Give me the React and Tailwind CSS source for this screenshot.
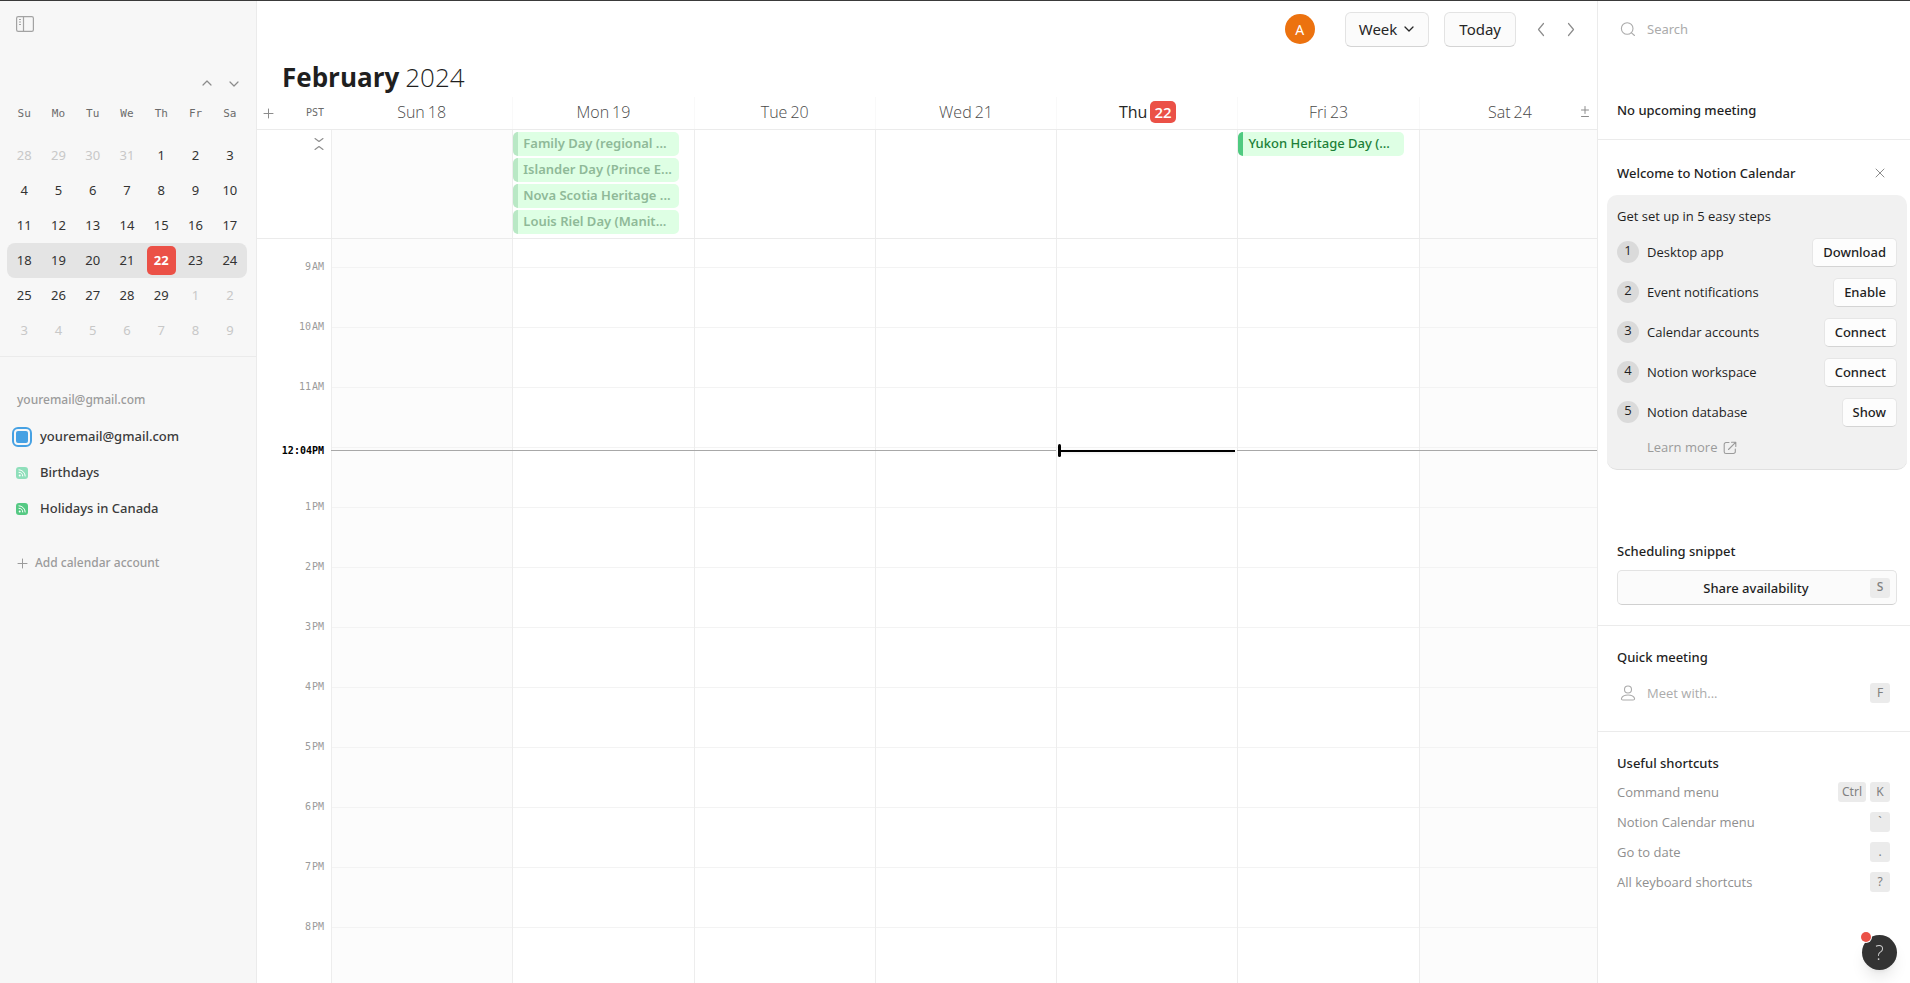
import React from "react";

const WEEKDAYS = ["Su", "Mo", "Tu", "We", "Th", "Fr", "Sa"];
const WEEKS = [
  [28, 29, 30, 31, 1, 2, 3],
  [4, 5, 6, 7, 8, 9, 10],
  [11, 12, 13, 14, 15, 16, 17],
  [18, 19, 20, 21, 22, 23, 24],
  [25, 26, 27, 28, 29, 1, 2],
  [3, 4, 5, 6, 7, 8, 9],
];
const DAYS = [
  { name: "Sun", date: 18, weekend: true, events: [] },
  {
    name: "Mon",
    date: 19,
    past: true,
    events: [
      "Family Day (regional ...",
      "Islander Day (Prince E...",
      "Nova Scotia Heritage ...",
      "Louis Riel Day (Manit...",
    ],
  },
  { name: "Tue", date: 20, events: [] },
  { name: "Wed", date: 21, events: [] },
  { name: "Thu", date: 22, today: true, events: [] },
  { name: "Fri", date: 23, events: ["Yukon Heritage Day (..."] },
  { name: "Sat", date: 24, weekend: true, last: true, events: [] },
];
const HOURS = ["9 AM", "10 AM", "11 AM", "", "1 PM", "2 PM", "3 PM", "4 PM", "5 PM", "6 PM", "7 PM", "8 PM"];
const STEPS = [
  ["Desktop app", "Download"],
  ["Event notifications", "Enable"],
  ["Calendar accounts", "Connect"],
  ["Notion workspace", "Connect"],
  ["Notion database", "Show"],
];
const SHORTCUTS = [
  ["Command menu", ["Ctrl", "K"]],
  ["Notion Calendar menu", ["`"]],
  ["Go to date", ["."]],
  ["All keyboard shortcuts", ["?"]],
];

function Icon({ d, size = 16, className = "", sw = 1 }) {
  return (
    <svg
      width={size}
      height={size}
      viewBox={`0 0 ${size} ${size}`}
      fill="none"
      stroke="currentColor"
      strokeWidth={sw}
      strokeLinecap="round"
      strokeLinejoin="round"
      className={"shrink-0 " + className}
      aria-hidden="true"
    >
      <path d={d} />
    </svg>
  );
}

function Kbd({ children }) {
  return (
    <kbd className="flex h-5 min-w-5 items-center justify-center rounded-[3px] bg-[#ebebeb] px-1 pb-px font-['Noto_Sans',sans-serif] text-[12px] text-[#808080]">
      {children}
    </kbd>
  );
}

function Heading({ children, className = "" }) {
  return (
    <h2 className={"font-['Noto_Sans',sans-serif] text-[13px] leading-5 font-medium " + className}>{children}</h2>
  );
}

function MiniCalendar() {
  return (
    <div className="mr-[9px] ml-[7px]">
      <table className="w-full table-fixed border-separate border-spacing-0 text-center">
        <thead>
          <tr>
            {WEEKDAYS.map((d) => (
              <th
                key={d}
                className="h-[38px] p-0 pt-1 align-top font-['DejaVu_Sans_Mono',monospace] text-[11px] leading-5 font-normal text-[#6b6b6b]"
              >
                {d}
              </th>
            ))}
          </tr>
        </thead>
        <tbody>
          {WEEKS.map((week, w) => (
            <tr key={w}>
              {week.map((day, i) => {
                const outside = (w === 0 && day > 20) || (w > 3 && day < 20);
                const current = w === 3;
                return (
                  <td
                    key={i}
                    className={
                      "h-[35px] p-0 font-['Noto_Sans',sans-serif] text-[13px] " +
                      (outside ? "text-[#c8c8c8] " : "text-[#333333] ") +
                      (current ? "bg-[#e4e4e4] first:rounded-l-lg last:rounded-r-lg" : "")
                    }
                  >
                    {current && day === 22 ? (
                      <span className="mx-auto flex h-[29px] w-[29px] items-center justify-center rounded-[5px] bg-[#eb5147] font-bold text-white">
                        22
                      </span>
                    ) : (
                      day
                    )}
                  </td>
                );
              })}
            </tr>
          ))}
        </tbody>
      </table>
    </div>
  );
}

function FeedIcon({ className }) {
  return (
    <span className={"flex h-3 w-3 items-center justify-center rounded-[3px] text-white " + className}>
      <svg width="12" height="12" viewBox="0 0 12 12" fill="none" stroke="currentColor" strokeLinecap="round" aria-hidden="true">
        <path d="M3 2.8a6.2 6.2 0 0 1 6.2 6.2M3 5.3A3.7 3.7 0 0 1 6.7 9" />
        <circle cx="3.7" cy="8.4" r="1" fill="currentColor" stroke="none" />
      </svg>
    </span>
  );
}

function Sidebar() {
  return (
    <aside className="flex w-[257px] shrink-0 flex-col border-r border-[#ebebeb] bg-[#f7f7f7]">
      <div className="flex h-[46px] items-center pl-4">
        <button aria-label="Toggle sidebar" className="text-[#a3a3a3]">
          <svg width="18" height="16" viewBox="0 0 18 16" fill="none" stroke="currentColor" aria-hidden="true">
            <rect x="0.6" y="0.6" width="16.8" height="14.8" rx="1.6" strokeWidth="1.2" />
            <path d="M7.5 1v14" strokeWidth="1.2" />
            <path d="M3 3.5h2M3 6h2M3 8.5h2" />
          </svg>
        </button>
      </div>
      <div className="mt-[26px] flex h-[27px] items-start justify-end gap-[11px] pr-[14px] text-[#8c8c8c]">
        <button aria-label="Previous month" className="py-0.5">
          <Icon d="M4 10l4-4 4 4" sw={1.2} />
        </button>
        <button aria-label="Next month" className="py-0.5">
          <Icon d="M4 7l4 4 4-4" sw={1.2} />
        </button>
      </div>
      <MiniCalendar />
      <div className="mt-2 border-t border-[#ebebeb]" />
      <div className="flex flex-col pt-[33px] font-['Noto_Sans',sans-serif] text-[13px] font-medium text-[#3b3b3b]">
        <h2 className="mb-[9px] pl-[17px] text-[12px] leading-5 text-[#9b9b9b]">youremail@gmail.com</h2>
        <label className="flex h-9 items-center pl-3">
          <input
            type="checkbox"
            defaultChecked
            className="mr-2 h-5 w-5 appearance-none rounded-[6px] border-2 border-[#46a1e3] bg-[#46a1e3] bg-clip-content p-0.5 checked:bg-[#46a1e3]"
          />
          youremail@gmail.com
        </label>
        <div className="flex h-9 items-center gap-3 pl-4">
          <FeedIcon className="bg-[#8fdfbb]" />
          Birthdays
        </div>
        <div className="flex h-9 items-center gap-3 pl-4">
          <FeedIcon className="bg-[#55c983]" />
          Holidays in Canada
        </div>
        <button className="mt-[26px] flex h-5 items-center gap-[5px] self-start pl-[15px] text-[12px] text-[#9b9b9b]">
          <Icon d="M7.5 3v9M3 7.5h9" size={15} />
          Add calendar account
        </button>
      </div>
    </aside>
  );
}

function EventChip({ title, past }) {
  return (
    <button
      className={
        "mr-[15px] flex h-6 items-center overflow-hidden rounded-[5px] border-l-[5px] bg-[#deffe4] pl-[5px] font-['Noto_Sans',sans-serif] text-[13px] whitespace-nowrap " +
        (past ? "border-[#b9e8c5] font-semibold text-[#8fb998]" : "border-[#4fca80] font-medium text-[#1c7f38]")
      }
    >
      {title}
    </button>
  );
}

function WeekView() {
  return (
    <main className="flex min-w-0 flex-1 flex-col overflow-hidden">
      <div className="flex h-14 shrink-0 items-center justify-end pr-[17px] font-['Noto_Sans',sans-serif]">
        <button className="flex h-[30px] w-[30px] items-center justify-center rounded-full bg-[#ec720f] text-[14px] text-white">
          A
        </button>
        <button className="ml-[30px] flex h-[35px] items-center gap-1.5 rounded-md border border-[#e3e3e3] border-b-[#d4d4d4] bg-[#fbfbfb] px-[13px] text-[15px] text-[#262626]">
          Week
          <Icon d="M2 4l4 4 4-4" size={12} sw={1.3} />
        </button>
        <button className="ml-[15px] h-[35px] rounded-md border border-[#e3e3e3] border-b-[#d4d4d4] bg-[#fbfbfb] px-[14px] text-[15px] text-[#262626]">
          Today
        </button>
        <button aria-label="Previous week" className="ml-4 text-[#8c8c8c]">
          <Icon d="M11.5 3.500L6.500 9.500l5 6" size={18} sw={1.2} />
        </button>
        <button aria-label="Next week" className="ml-3 text-[#8c8c8c]">
          <Icon d="M6.500 3.500L11.500 9.500l-5 6" size={18} sw={1.2} />
        </button>
      </div>
      <h1 className="flex h-10 shrink-0 gap-1.5 pl-[25px] text-[26px] leading-10 text-[#1f1f1f]">
        <b className="font-bold">February</b>
        <span className="font-light">2024</span>
      </h1>
      <div className="flex h-[33px] shrink-0 border-b border-[#ebebeb]">
        <div className="flex w-[74px] shrink-0 items-center justify-between pr-[7px] pl-1">
          <button aria-label="Add time zone" className="text-[#8c8c8c]">
            <Icon d="M7.500 4v9M3 8.500h9" />
          </button>
          <span className="pb-0.5 font-['DejaVu_Sans_Mono',monospace] text-[10px] text-[#6b6b6b]">PST</span>
        </div>
        <div className="-mr-[3px] grid flex-1 grid-cols-7">
          {DAYS.map((d, i) => (
            <div
              key={d.name}
              className={
                "relative flex items-center justify-center gap-[3px] pb-0.5 text-[16px] " +
                (d.today ? "text-[#262626] " : "font-light text-[#4a4a4a] ") +
                (i > 0 ? "border-l border-[#f9f9f9]" : "")
              }
            >
              {d.name}
              {d.today ? (
                <span className="rounded-[5px] bg-[#eb5147] px-1 text-[15px] leading-[22px] font-semibold text-white">22</span>
              ) : (
                <span>{d.date}</span>
              )}
              {d.last && (
                <button aria-label="Adjust days" className="absolute right-[7px] text-[#8c8c8c]">
                  <Icon d="M8 2.500v7M4.500 6h7M4.500 12.500h7" />
                </button>
              )}
            </div>
          ))}
        </div>
      </div>
      <div className="flex h-[109px] shrink-0 border-b border-[#ebebeb]">
        <div className="flex w-[74px] shrink-0 justify-end pt-1.5 pr-1">
          <button aria-label="Collapse all-day events" className="h-4 text-[#8c8c8c]">
            <Icon d="M4 2.500l4 3 4-3M4 13.500l4-3 4 3" sw={1.1} />
          </button>
        </div>
        <div className="-mr-[3px] grid flex-1 grid-cols-7">
          {DAYS.map((d, i) => (
            <div
              key={d.name}
              className={
                "flex flex-col gap-0.5 border-l border-[#ededed] pt-0.5 " + (d.weekend ? "bg-[#fcfcfc]" : "")
              }
            >
              {d.events.map((e) => (
                <EventChip key={e} title={e} past={d.past} />
              ))}
            </div>
          ))}
        </div>
      </div>
      <div className="relative flex min-h-0 flex-1 overflow-hidden">
        <div className="flex w-[74px] shrink-0 flex-col gap-10 pt-[17px] pr-[7px] font-['DejaVu_Sans_Mono',monospace] text-[10px] text-[#9b9b9b]">
          {HOURS.map((h, i) => (
            <div key={i} className="flex h-5 shrink-0 items-center justify-end gap-px">
              {h.split(" ").map((part) => (
                <span key={part}>{part}</span>
              ))}
            </div>
          ))}
        </div>
        <div className="-mr-[3px] grid flex-1 grid-cols-7">
          {DAYS.map((d) => (
            <div
              key={d.name}
              className={"flex flex-col border-l border-[#ededed] " + (d.weekend ? "bg-[#fcfcfc]" : "")}
            >
              <div className="h-[29px] shrink-0 border-b border-[#f3f3f3]" />
              {HOURS.map((h, j) => (
                <div key={j} className="h-[60px] shrink-0 border-b border-[#f3f3f3]" />
              ))}
            </div>
          ))}
        </div>
        <div className="absolute inset-x-0 top-[202px] flex h-[19px] items-center">
          <time className="w-[74px] pr-[7px] text-right font-['DejaVu_Sans_Mono',monospace] text-[10px] font-bold text-black">
            12:04PM
          </time>
          <div className="-mr-[3px] grid flex-1 grid-cols-7 items-center">
            <div className="col-span-4 h-px bg-[#a8a8a8]" />
            <div className="flex items-center px-0.5">
              <span className="h-[13px] w-[3px] rounded-sm bg-black" />
              <span className="h-0.5 flex-1 bg-black shadow" />
            </div>
            <div className="col-span-2 h-px bg-[#a8a8a8]" />
          </div>
        </div>
      </div>
    </main>
  );
}

function ContextPanel() {
  return (
    <aside className="flex w-[313px] shrink-0 flex-col border-l border-[#ebebeb] text-[13px] text-[#1f1f1f]">
      <label className="flex h-14 shrink-0 items-center pr-3 pl-[22px] text-[#ababab]">
        <Icon d="M13 7.500a5.800 5.800 0 1 1-11.600 0a5.800 5.800 0 1 1 11.600 0M11.500 11.800L14.500 14.500" sw={1.1} />
        <input
          type="search"
          aria-label="Search"
          placeholder="Search"
          className="ml-[11px] min-w-0 flex-1 pt-0.5 font-['Noto_Sans',sans-serif] outline-none placeholder:text-[#ababab]"
        />
      </label>
      <section className="border-b border-[#ebebeb] pt-[43px] pb-[19px] pl-[19px]">
        <Heading>No upcoming meeting</Heading>
      </section>
      <section className="border-b border-[#ebebeb] pt-[23px] pb-5">
        <div className="mb-3 flex h-5 items-center justify-between pr-[22px] pl-[19px]">
          <Heading>Welcome to Notion Calendar</Heading>
          <button aria-label="Dismiss" className="text-[#8c8c8c]">
            <Icon d="M4 4l8 8M12 4l-8 8" />
          </button>
        </div>
        <div className="mr-[3px] ml-[9px] rounded-[10px] border-b border-[#e0e0e0] bg-[#f1f1f1] px-2.5 pt-[11px] pb-[11px]">
          <p className="mb-1.5 leading-5">Get set up in 5 easy steps</p>
          <ol>
            {STEPS.map(([label, action], i) => (
              <li key={label} className="flex h-10 items-center">
                <span className="mr-2 flex h-[22px] w-[22px] items-center justify-center rounded-full bg-[#dadada] pb-0.5 text-[13px]">
                  {i + 1}
                </span>
                <span className="flex-1 pt-0.5">{label}</span>
                <button className="h-[29px] rounded-[5px] border border-[#e6e6e6] border-b-[#d4d4d4] bg-[#fdfdfd] px-[10px] pt-0.5 font-['Noto_Sans',sans-serif] font-medium">
                  {action}
                </button>
              </li>
            ))}
          </ol>
          <a
            href="#learn"
            className="mt-1.5 ml-[30px] flex h-5 items-center gap-1.5 font-medium text-[#9b9b9b]"
          >
            Learn more
            <Icon
              d="M6 1.500H3a1.800 1.800 0 0 0-1.800 1.800v7.400A1.800 1.800 0 0 0 3 12.500h7.500a1.800 1.800 0 0 0 1.800-1.800V8M8.500 1.200h4.300v4.300M12.600 1.400L5.500 8.500"
              size={14}
              sw={1.1}
            />
          </a>
        </div>
        <Heading className="mt-[71px] mb-[9px] pl-[19px]">Scheduling snippet</Heading>
        <div className="flex pr-[13px] pl-[19px]">
          <button className="flex h-[35px] flex-1 items-center rounded-[5px] border border-[#e3e3e3] border-b-[#d0d0d0] bg-[#fbfbfb] pr-1.5 font-['Noto_Sans',sans-serif] font-medium">
            <span className="flex-1 pt-0.5 pl-6">Share availability</span>
            <Kbd>S</Kbd>
          </button>
        </div>
      </section>
      <section className="border-b border-[#ebebeb] pt-[21px] pr-5 pb-[23px] pl-[19px]">
        <Heading>Quick meeting</Heading>
        <label className="mt-[11px] flex h-[30px] items-center pl-[3px] text-[#ababab]">
          <Icon
            d="M11.500 4.500a3.500 3.500 0 1 1-7 0a3.500 3.500 0 1 1 7 0M3 15c-1.200 0-1.800-.8-1.500-1.700C2.300 11 4.800 10 8 10s5.700 1 6.500 3.300c.3.900-.3 1.700-1.500 1.700z"
            sw={1.1}
          />
          <input
            type="text"
            aria-label="Meet with"
            placeholder="Meet with..."
            className="ml-[11px] min-w-0 flex-1 pt-0.5 outline-none placeholder:text-[#ababab]"
          />
          <Kbd>F</Kbd>
        </label>
      </section>
      <section className="pt-[21px] pr-5 pl-[19px]">
        <Heading className="mb-1">Useful shortcuts</Heading>
        <ul>
          {SHORTCUTS.map(([label, keys]) => (
            <li key={label} className="flex h-[30px] items-center gap-1 text-[#8f8f8f]">
              <span className="flex-1 pt-0.5">{label}</span>
              {keys.map((k) => (
                <Kbd key={k}>{k}</Kbd>
              ))}
            </li>
          ))}
        </ul>
      </section>
    </aside>
  );
}

export default function App() {
  return (
    <div className="flex h-screen overflow-hidden border-t border-[#3a3a3a] bg-white font-['Open_Sans','Noto_Sans',sans-serif]">
      <Sidebar />
      <WeekView />
      <ContextPanel />
      <button
        aria-label="Help"
        className="fixed right-[13px] bottom-[13px] flex h-[35px] w-[35px] items-center justify-center rounded-full bg-[#333333] text-[20px] font-light text-[#d0d0d0] shadow-lg"
      >
        ?
        <span className="absolute -top-[3px] -left-px h-2.5 w-2.5 rounded-full bg-[#eb5147] ring-1 ring-white" />
      </button>
    </div>
  );
}
